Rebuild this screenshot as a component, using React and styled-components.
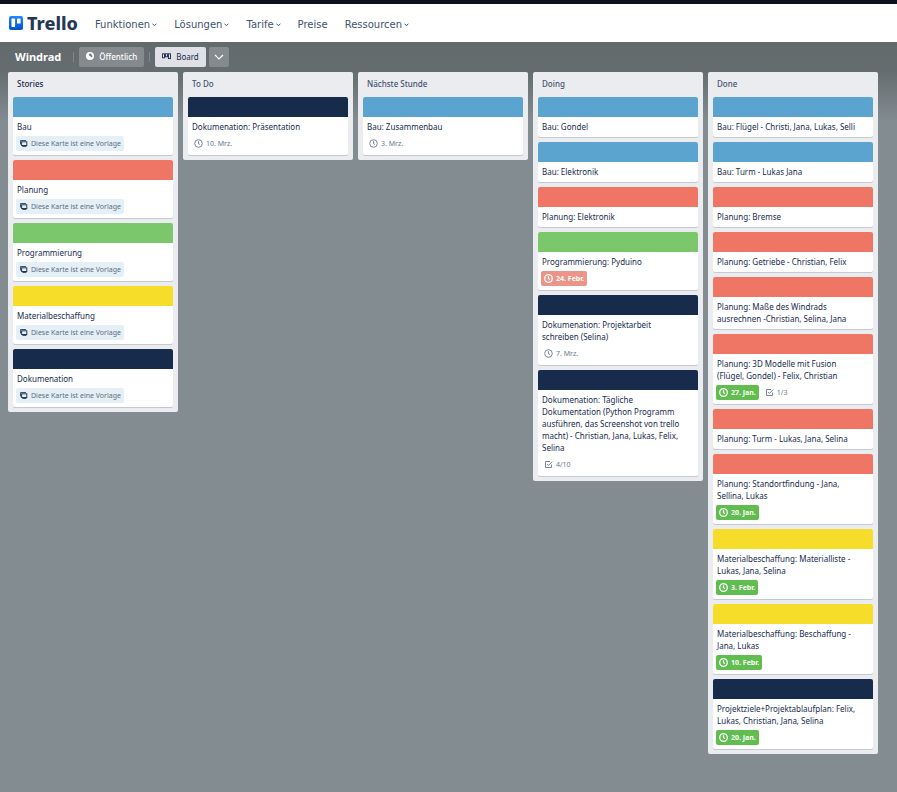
import React from 'react';
import styled, { createGlobalStyle } from 'styled-components';

const palette = {
  blue: '#5ba4cf',
  red: '#ef7564',
  green: '#7bc86c',
  yellow: '#f5dd29',
  navy: '#172b4d',
};

const GlobalStyle = createGlobalStyle`
  * { box-sizing: border-box; }
  body { margin: 0; background: #838c91; }
  button { font: inherit; border: 0; cursor: pointer; }
`;

const Page = styled.div`
  min-height: 100vh;
  display: flex;
  flex-direction: column;
  background: linear-gradient(180deg, #626a6c 42px, #656d70 72px, #838c91 122px);
  color: ${palette.navy};
  font-family: 'Noto Sans', 'Open Sans', sans-serif;
  font-size: 8px;
  line-height: 12px;
`;

const TopNav = styled.header`
  display: flex;
  align-items: center;
  height: 42px;
  padding: 0 9px;
  border-top: 4px solid #0b111c;
  background: #fff;
`;

const Logo = styled.a`
  display: flex;
  align-items: center;
  gap: 4px;
  margin-right: 17px;
  color: #253858;
  font-size: 18px;
  font-weight: 800;
  line-height: 24px;
  text-decoration: none;
`;

const NavLinks = styled.nav`
  display: flex;
  gap: 17px;
  padding-top: 4px;
`;

const NavItem = styled.button`
  display: flex;
  align-items: center;
  gap: 2px;
  padding: 0;
  background: none;
  color: #42526e;
  font-family: 'DejaVu Sans', sans-serif;
  font-size: 10px;
  line-height: 14px;
`;

const BoardHeader = styled.div`
  display: flex;
  align-items: center;
  height: 30px;
  padding: 0 8px 0 15px;
`;

const BoardTitle = styled.h1`
  margin: 0;
  color: #fff;
  font-size: 11px;
  line-height: 16px;
  font-weight: 700;
`;

const Divider = styled.span`
  width: 1px;
  height: 10px;
  margin: 0 5px;
  background: #80878a;

  ${BoardTitle} + & { margin-left: 12px; }
`;

const HeaderButton = styled.button`
  display: flex;
  align-items: center;
  gap: 5px;
  height: 20px;
  padding: 0 ${p => (p.$iconOnly ? 5 : 7)}px;
  border-radius: 2px;
  background: ${p => (p.$light ? '#dfe1e6' : '#848a8d')};
  color: ${p => (p.$light ? palette.navy : '#fff')};
  font-weight: ${p => (p.$light ? 400 : 500)};

  & + & { margin-left: 3px; }
`;

const Board = styled.main`
  display: flex;
  align-items: flex-start;
  gap: 5px;
  padding: 0 8px 8px;
`;

const List = styled.section`
  flex: 0 0 170px;
  padding: 0 5px 5px;
  border-radius: 2px;
  background: #ebecf0;
`;

const ListTitle = styled.h2`
  margin: 0;
  padding: 6px 4px 7px;
  color: ${p => (p.$active ? palette.navy : '#42526e')};
  font-size: 8px;
  line-height: 12px;
  font-weight: 500;
`;

const Cards = styled.div`
  display: flex;
  flex-direction: column;
  gap: 5px;
`;

const Card = styled.article`
  overflow: hidden;
  border-radius: 2px;
  background: #fff;
  box-shadow: 0 1px 0 #c5c9d2;
`;

const Cover = styled.div`
  height: 20px;
  background: ${p => palette[p.$color]};
`;

const CardBody = styled.div`
  padding: 4px 3px;
`;

const CardTitle = styled.p`
  margin: 0;
  padding: 0 8px 0 1px;
`;

const Badges = styled.div`
  display: flex;
  gap: 3px;
  margin-top: 3px;
`;

const badgeTones = {
  plain: { bg: 'transparent', fg: '#6b778c' },
  template: { bg: '#e4f0f6', fg: '#5e6c84' },
  done: { bg: '#61bd4f', fg: '#fff' },
  late: { bg: '#ec9488', fg: '#fff' },
};

const Badge = styled.span`
  display: flex;
  align-items: center;
  gap: 3px;
  height: 15px;
  padding: 0 3px;
  border-radius: 2px;
  background: ${p => badgeTones[p.$tone].bg};
  color: ${p => badgeTones[p.$tone].fg};
  font-size: 7px;
  font-weight: ${p => (p.$tone === 'done' || p.$tone === 'late' ? 700 : 400)};
`;

const Icon = styled.svg`
  flex: none;
  display: block;
  fill: none;
  stroke: currentColor;
`;

const TrelloMark = () => (
  <Icon width="14" height="14" viewBox="0 0 14 14" aria-hidden="true">
    <defs>
      <linearGradient id="mark" x1="0" y1="0" x2="0" y2="1">
        <stop offset="0" stopColor="#2684ff" />
        <stop offset="1" stopColor="#0052cc" />
      </linearGradient>
    </defs>
    <rect width="14" height="14" rx="2" fill="url(#mark)" stroke="none" />
    <rect x="2.5" y="2.5" width="3.6" height="8.6" rx=".6" fill="#fff" stroke="none" />
    <rect x="8" y="2.5" width="3.6" height="5" rx=".6" fill="#fff" stroke="none" />
  </Icon>
);

const NavChevron = () => (
  <Icon width="5" height="4" viewBox="0 0 5 4" aria-hidden="true">
    <path d="M.6 .9 2.5 2.5 4.4 .9" />
  </Icon>
);

const Chevron = () => (
  <Icon width="10" height="10" viewBox="0 0 10 10" strokeWidth="1.2" aria-hidden="true">
    <path d="M1 3 5 7 9 3" />
  </Icon>
);

const Globe = () => (
  <Icon width="8" height="10" viewBox="0 0 8 10" aria-hidden="true">
    <circle cx="4" cy="4" r="4" fill="#fff" stroke="none" />
    <path d="M3.8 1.4 5.6 1.8 5.2 3 6.6 3.8 6 5.4 4.6 4.6 3.2 3.6 2.8 2.2z" fill="#73797c" stroke="none" />
  </Icon>
);

const BoardIcon = () => (
  <Icon width="9" height="8" viewBox="0 0 9 8" strokeWidth=".9" aria-hidden="true">
    <rect x=".5" y=".8" width="2" height="4" />
    <rect x="3.5" y=".8" width="2" height="3" />
    <rect x="6.5" y=".8" width="2" height="4.8" />
  </Icon>
);

const Clock = ({ bold }) => (
  <Icon width="9" height="9" viewBox="0 0 9 9" strokeWidth={bold ? 1.3 : 0.9} aria-hidden="true">
    <circle cx="4.5" cy="4.5" r="3.8" />
    <path d="M4.5 2.2V4.7L6 5.5" />
  </Icon>
);

const Check = () => (
  <Icon width="9" height="9" viewBox="0 0 9 9" strokeWidth=".9" aria-hidden="true">
    <path d="M7.5 4.5V7.5H1.5V1.5H6" />
    <path d="M3 4 4.4 5.5 8.2 1.6" />
  </Icon>
);

const TemplateIcon = () => (
  <Icon width="9" height="9" viewBox="0 0 9 9" aria-hidden="true">
    <path d="M1.5 5.5V1.5H7" stroke="#42526e" />
    <rect x="2.6" y="2.8" width="5.2" height="3.7" stroke="#253858" />
    <path d="M3.4 7.4H7.4" stroke="#253858" />
  </Icon>
);

const badgeIcons = {
  template: () => <TemplateIcon />,
  date: () => <Clock />,
  done: () => <Clock bold />,
  late: () => <Clock bold />,
  checklist: () => <Check />,
};

const toneOf = { template: 'template', date: 'plain', done: 'done', late: 'late', checklist: 'plain' };

const template = [['template', 'Diese Karte ist eine Vorlage']];

const lists = [
  {
    title: 'Stories',
    active: true,
    cards: [
      ['blue', 'Bau', template],
      ['red', 'Planung', template],
      ['green', 'Programmierung', template],
      ['yellow', 'Materialbeschaffung', template],
      ['navy', 'Dokumenation', template],
    ],
  },
  { title: 'To Do', cards: [['navy', 'Dokumenation: Präsentation', [['date', '10. Mrz.']]]] },
  { title: 'Nächste Stunde', cards: [['blue', 'Bau: Zusammenbau', [['date', '3. Mrz.']]]] },
  {
    title: 'Doing',
    cards: [
      ['blue', 'Bau: Gondel'],
      ['blue', 'Bau: Elektronik'],
      ['red', 'Planung: Elektronik'],
      ['green', 'Programmierung: Pyduino', [['late', '24. Febr.']]],
      ['navy', 'Dokumenation: Projektarbeit schreiben (Selina)', [['date', '7. Mrz.']]],
      [
        'navy',
        'Dokumenation: Tägliche Dokumentation (Python Programm ausführen, das Screenshot von trello macht) - Christian, Jana, Lukas, Felix, Selina',
        [['checklist', '4/10']],
      ],
    ],
  },
  {
    title: 'Done',
    cards: [
      ['blue', 'Bau: Flügel - Christi, Jana, Lukas, Selli'],
      ['blue', 'Bau: Turm - Lukas Jana'],
      ['red', 'Planung: Bremse'],
      ['red', 'Planung: Getriebe - Christian, Felix'],
      ['red', 'Planung: Maße des Windrads ausrechnen -Christian, Selina, Jana'],
      ['red', 'Planung: 3D Modelle mit Fusion (Flügel, Gondel) - Felix, Christian', [['done', '27. Jan.'], ['checklist', '1/3']]],
      ['red', 'Planung: Turm - Lukas, Jana, Selina'],
      ['red', 'Planung: Standortfindung - Jana, Sellina, Lukas', [['done', '20. Jan.']]],
      ['yellow', 'Materialbeschaffung: Materialliste - Lukas, Jana, Selina', [['done', '3. Febr.']]],
      ['yellow', 'Materialbeschaffung: Beschaffung - Jana, Lukas', [['done', '10. Febr.']]],
      ['navy', 'Projektziele+Projektablaufplan: Felix, Lukas, Christian, Jana, Selina', [['done', '20. Jan.']]],
    ],
  },
];

const navItems = [
  ['Funktionen', true],
  ['Lösungen', true],
  ['Tarife', true],
  ['Preise', false],
  ['Ressourcen', true],
];

export default function App() {
  return (
    <Page>
      <GlobalStyle />
      <TopNav>
        <Logo href="#">
          <TrelloMark />
          Trello
        </Logo>
        <NavLinks>
          {navItems.map(([label, menu]) => (
            <NavItem key={label} type="button">
              {label}
              {menu && <NavChevron />}
            </NavItem>
          ))}
        </NavLinks>
      </TopNav>
      <BoardHeader>
        <BoardTitle>Windrad</BoardTitle>
        <Divider />
        <HeaderButton type="button">
          <Globe />
          Öffentlich
        </HeaderButton>
        <Divider />
        <HeaderButton type="button" $light>
          <BoardIcon />
          Board
        </HeaderButton>
        <HeaderButton type="button" $iconOnly aria-label="Ansichten">
          <Chevron />
        </HeaderButton>
      </BoardHeader>
      <Board>
        {lists.map(list => (
          <List key={list.title}>
            <ListTitle $active={list.active}>{list.title}</ListTitle>
            <Cards>
              {list.cards.map(([color, title, badges]) => (
                <Card key={title}>
                  <Cover $color={color} />
                  <CardBody>
                    <CardTitle>{title}</CardTitle>
                    {badges && (
                      <Badges>
                        {badges.map(([kind, text]) => (
                          <Badge key={kind} $tone={toneOf[kind]}>
                            {badgeIcons[kind]()}
                            {text}
                          </Badge>
                        ))}
                      </Badges>
                    )}
                  </CardBody>
                </Card>
              ))}
            </Cards>
          </List>
        ))}
      </Board>
    </Page>
  );
}
